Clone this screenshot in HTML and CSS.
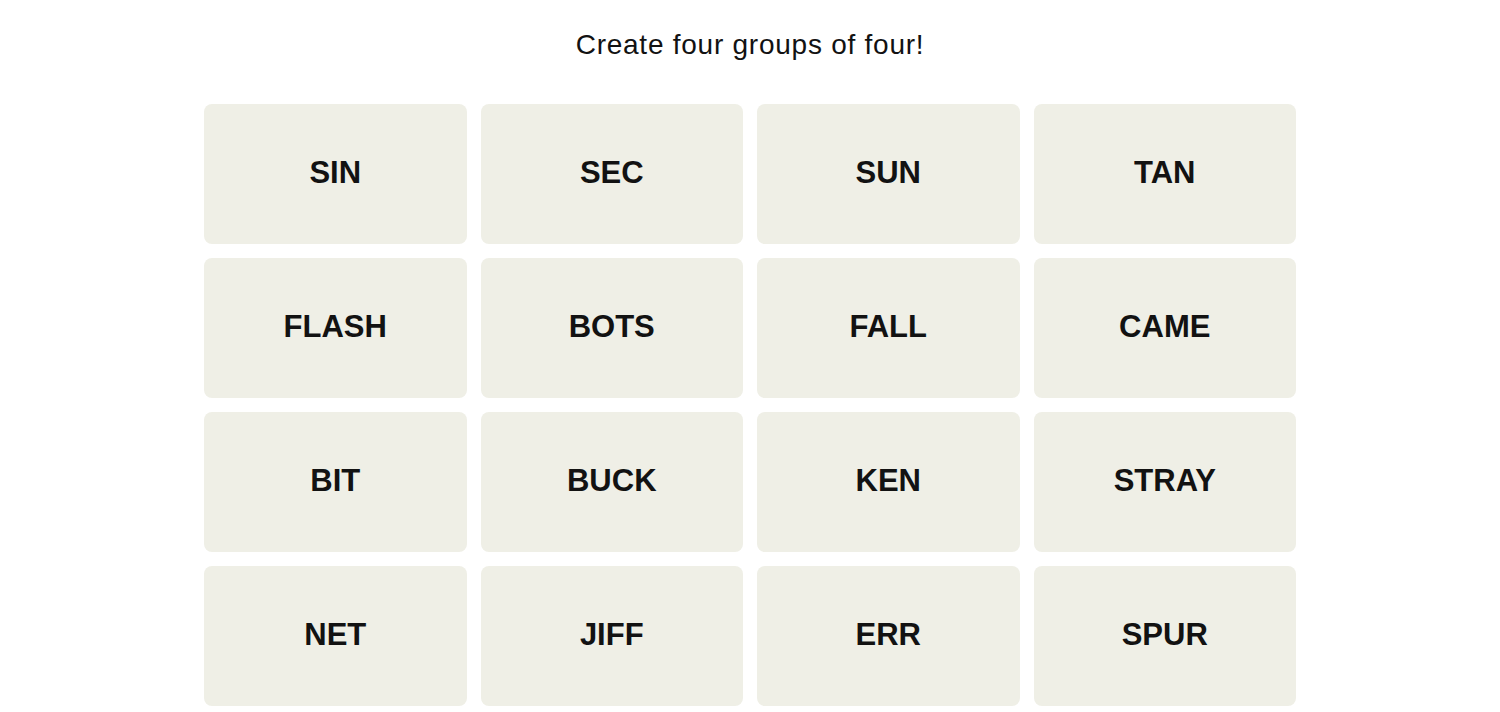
FILE: index.html
```html
<!DOCTYPE html>
<html lang="en">
<head>
<meta charset="utf-8">
<title>Connections</title>
<link rel="stylesheet" href="styles.css">
</head>
<body>
<main class="game">
  <p class="prompt">Create four groups of four!</p>
  <section class="board">
    <button class="tile">SIN</button>
    <button class="tile">SEC</button>
    <button class="tile">SUN</button>
    <button class="tile">TAN</button>
    <button class="tile">FLASH</button>
    <button class="tile">BOTS</button>
    <button class="tile">FALL</button>
    <button class="tile">CAME</button>
    <button class="tile">BIT</button>
    <button class="tile">BUCK</button>
    <button class="tile">KEN</button>
    <button class="tile">STRAY</button>
    <button class="tile">NET</button>
    <button class="tile">JIFF</button>
    <button class="tile">ERR</button>
    <button class="tile">SPUR</button>
  </section>
</main>
</body>
</html>
```
FILE: styles.css
```css
html, body {
  margin: 0;
  padding: 0;
  background: #ffffff;
}

body {
  font-family: "Liberation Sans", Arial, sans-serif;
  color: #121212;
}

.game {
  width: 1092px;
  margin: 0 auto;
  padding-top: 27px;
}

.prompt {
  margin: 0;
  text-align: center;
  font-size: 28px;
  line-height: 36px;
  letter-spacing: 0.75px;
  font-weight: 400;
  color: #121212;
}

.board {
  margin-top: 41px;
  display: grid;
  grid-template-columns: repeat(4, 1fr);
  grid-auto-rows: 140px;
  gap: 14px;
}

.tile {
  border: none;
  border-radius: 8px;
  background: #efefe6;
  font-family: "Liberation Sans", Arial, sans-serif;
  font-weight: 700;
  font-size: 31px;
  color: #121212;
  padding: 0 0 2px;
  display: flex;
  align-items: center;
  justify-content: center;
  text-transform: uppercase;
}
```
